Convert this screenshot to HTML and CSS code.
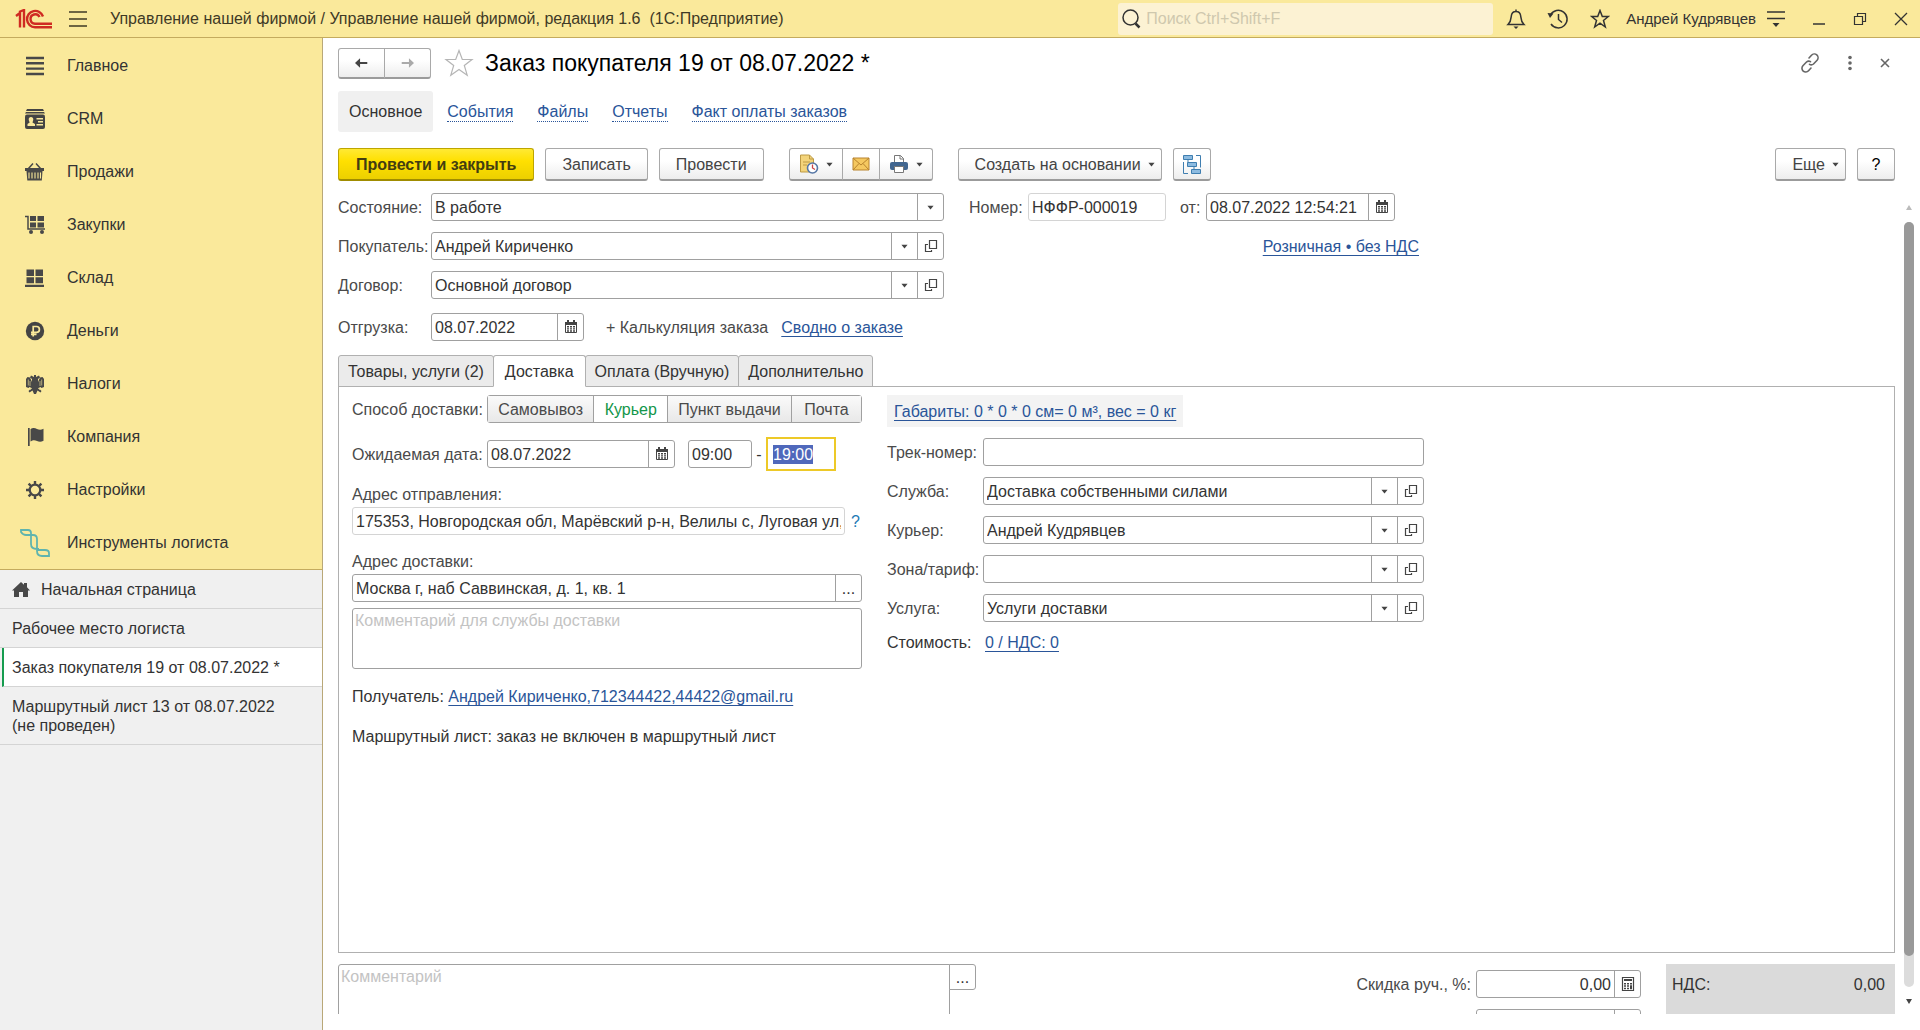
FILE: index.html
```html
<!DOCTYPE html>
<html lang="ru">
<head>
    <meta charset="UTF-8">
    <meta name="viewport" content="width=device-width, initial-scale=1.0">
    <title>Управление нашей фирмой</title>
    <link rel="stylesheet" href="styles.css">
</head>
<body>
    <svg class="sprite" aria-hidden="true">
        <symbol id="i-arrow" viewBox="0 0 8 5"><path d="M0.500 0.500h7L4 4.800z" fill="#444"/></symbol>
        <symbol id="i-open" viewBox="0 0 14 14"><path d="M5.500 1.500h7v8h-7zM4 5.500H1.500v7h6V11" fill="none" stroke="#444" stroke-width="1.200"/></symbol>
        <symbol id="i-calendar" viewBox="0 0 14 14"><path d="M1.500 3.500h11v9h-11z" fill="#fff" stroke="#444"/><path d="M1 2h12v3H1zM3 0h2v2H3zM9 0h2v2H9z" fill="#444"/><path d="M3 6h2v1.500H3zM6 6h2v1.500H6zM9 6h2v1.500H9zM3 8.200h2v1.400H3zM6 8.200h2v1.400H6zM9 8.200h2v1.400H9zM3 10.300h2v1.400H3zM6 10.300h2v1.400H6zM9 10.300h2v1.400H9z" fill="#444"/></symbol>
        <symbol id="i-calc" viewBox="0 0 14 16"><path d="M1.500 1.500h11v13h-11z" fill="#fff" stroke="#444" stroke-width="1.200"/><path d="M3 3h8v2H3zM3 7h2v1.500H3zM6 7h2v1.500H6zM9 7h2v1.500H9zM3 9.300h2v1.500H3zM6 9.300h2v1.500H6zM9 9.300h2v4H9zM3 11.800h2v1.500H3zM6 11.800h2v1.500H6z" fill="#444"/></symbol>
    </svg>

    <header class="titlebar">
        <svg class="logo" width="38" height="20" viewBox="0 0 38 20" fill="none" stroke="#cf2b22" stroke-width="2.400"><path d="M1 7l4-3v14.500M4 3l5-2v17.500"/><path d="M28 7.500A8.200 8.200 0 1 0 20 18.300H37"/><path d="M24.500 8A4.700 4.700 0 1 0 20 14.700H37"/></svg>
        <button class="icon-btn burger" aria-label="Меню"><svg width="20" height="18" viewBox="0 0 20 18" stroke="#3f3a26" stroke-width="1.500"><path d="M1 2h18M1 9h18M1 16h18"/></svg></button>
        <span class="app-title">Управление нашей фирмой / Управление нашей фирмой, редакция 1.6 &nbsp;(1С:Предприятие)</span>
        <label class="search">
            <svg width="20" height="20" viewBox="0 0 20 20" fill="none" stroke="#333"><circle cx="9.500" cy="8.500" r="7.500" stroke-width="1.500"/><path d="M14.500 14.500l4 4" stroke-width="2.500"/></svg>
            <input type="text" placeholder="Поиск Ctrl+Shift+F" aria-label="Поиск">
        </label>
        <div class="title-tools">
            <button class="icon-btn" aria-label="Уведомления"><svg width="20" height="22" viewBox="0 0 20 22" fill="none" stroke="#333" stroke-width="1.500"><path d="M2 16.500c3-3 3-5 3.300-8.500C5.600 5 7.500 3.500 10 3.500S14.400 5 14.700 8c.3 3.500.3 5.500 3.300 8.500zM10 1.500v2"/><path d="M7.500 18.500h5L10 21z" fill="#333" stroke="none"/></svg></button>
            <button class="icon-btn" aria-label="История"><svg width="22" height="22" viewBox="0 0 22 22" fill="none" stroke="#333" stroke-width="1.500"><path d="M3.500 7A8.800 8.800 0 1 1 4 16M11.500 6v5.500l3.500 3"/><path d="M0.500 5l6 .5L3 10z" fill="#333" stroke="none"/></svg></button>
            <button class="icon-btn" aria-label="Избранное"><svg width="20" height="20" viewBox="0 0 20 20" fill="none" stroke="#333" stroke-width="1.500"><path d="M10 1.500l2.300 6h6l-4.800 4 1.800 6.500L10 14.200 4.700 18l1.800-6.500-4.800-4h6z"/></svg></button>
        </div>
        <span class="user">Андрей Кудрявцев</span>
        <div class="window-tools">
            <button class="icon-btn" aria-label="Настройка"><svg width="18" height="20" viewBox="0 0 18 20" stroke="#333" stroke-width="1.500"><path d="M0 3h18M0 9.500h18"/><path d="M5.500 14h7L9 18z" fill="#333" stroke="none"/></svg></button>
            <button class="icon-btn" aria-label="Свернуть"><svg width="14" height="14" viewBox="0 0 14 14" stroke="#333" stroke-width="1.500"><path d="M1 12h12"/></svg></button>
            <button class="icon-btn" aria-label="Развернуть"><svg width="14" height="14" viewBox="0 0 14 14" fill="none" stroke="#333" stroke-width="1.200"><path d="M1.500 4.500h8v8h-8zM4.500 4.500v-3h8v8h-3"/></svg></button>
            <button class="icon-btn" aria-label="Закрыть"><svg width="14" height="14" viewBox="0 0 14 14" stroke="#333" stroke-width="1.300"><path d="M1 1l12 12M13 1L1 13"/></svg></button>
        </div>
    </header>

    <div class="workspace">
        <aside class="sidebar">
            <nav class="sections">
                <a href="#"><svg viewBox="0 0 20 20" fill="none" stroke="#484848" stroke-width="2.400"><path d="M1 2h18M1 7.300h18M1 12.600h18M1 18h18"/></svg>Главное</a>
                <a href="#"><svg viewBox="0 0 20 20" fill="#444"><path d="M2 0h16l1 2H1zM1 3h18l1 1.500H0z"/><rect y="5.500" width="20" height="14.500" rx="2"/><path d="M6 8c1.500 0 2.300 1 2.300 2.300S7.500 13 7.500 13.500L10 15v2H2.500v-2l2.200-1.500C4.500 13 3.700 11.500 3.700 10.300S4.500 8 6 8zM11.500 9H18v1.500h-6.500zM13 12h5v1.500h-5zM11.500 15H18v1.500h-6.500z" fill="#fae99b"/></svg>CRM</a>
                <a href="#"><svg viewBox="0 0 20 20" fill="#484848"><path d="M0 6h19v3H0zM1.500 9h16l-.7 9.500H2.300z"/><path d="M3.500 6.500L8 1.500M15.500 6.500L11 1.500" stroke="#484848" stroke-width="1.500"/><path d="M4 10.500v6M7 10.500v6M10 10.500v6M13 10.500v6M15.500 10.500v6" stroke="#fae99b" stroke-width="1.100"/></svg>Продажи</a>
                <a href="#"><svg viewBox="0 0 20 20" fill="#484848"><path d="M5 1h6v5H5zM12.500 1H19v5h-6.500zM5 7.500h6v5H5zM12.500 7.500H19v5h-6.500z"/><path d="M0 1.500h3v12.500h17" fill="none" stroke="#484848" stroke-width="1.500"/><circle cx="6" cy="17" r="2"/><circle cx="17" cy="17" r="2"/></svg>Закупки</a>
                <a href="#"><svg viewBox="0 0 20 20" fill="#484848"><path d="M1.500 1.500H9v6.500H1.500zM10.500 1.500H18v6.500h-7.500zM1.500 9.300H9v6H1.500zM10.500 9.300H18v6h-7.500zM0 16.700h19V19H0z"/></svg>Склад</a>
                <a href="#"><svg viewBox="0 0 20 20"><circle cx="10" cy="10" r="9.200" fill="#444"/><path d="M8.200 15.500V5.500h3.300a2.900 2.900 0 0 1 0 5.800H6M6 13.300h5.500" fill="none" stroke="#fae99b" stroke-width="1.700"/></svg>Деньги</a>
                <a href="#"><svg viewBox="0 0 20 20" fill="#484848"><path d="M9 1h2v2l3-1.500 1 2-2 1.500V8l2-4.500L17.500 3 19 5v8l-2.500 1-1-1-2 1 3 3-1 1.500-3-2L11 20H9l-1.500-3.500-3 2-1-1.500 3-3-2-1-1 1L1 13V5l1.500-2L5 3.500 7 8V5L5 3.500l1-2L9 3z"/><path d="M3.300 5.500v6M5 7v5M16.700 5.500v6M15 7v5M7 14l-2 2M13 14l2 2" stroke="#fae99b" stroke-width=".6"/></svg>Налоги</a>
                <a href="#"><svg viewBox="0 0 20 20" fill="#484848"><path d="M3 1h1.700v18H3zM5.500 2.200c3-2 4.500-1 6.500-.2s4 1 6.500-.2v12c-2.500 1.200-4.500 1-6.500.2s-3.500-1.500-6.500.5z"/></svg>Компания</a>
                <a href="#"><svg viewBox="0 0 20 20" fill="none" stroke="#484848"><circle cx="10" cy="10" r="5.300" stroke-width="2.300"/><path d="M10 1v4M10 15v4M1 10h4M15 10h4M3.600 3.600l2.800 2.800M13.600 13.600l2.800 2.800M3.600 16.400l2.800-2.800M13.600 6.400l2.800-2.800" stroke-width="2.400"/></svg>Настройки</a>
                <a href="#"><svg class="wide" viewBox="0 0 32 30" fill="none" stroke="#5fb4ae" stroke-width="1.800"><path d="M2 2h7q3 0 3 3v2h-5q-3 0-5-3zM12 7h2q4 0 4 4v8M12 7v9q0 5 6 5h2M18 19v4q0 5 5 5h7v-3q0-3-4-3h-8"/></svg>Инструменты логиста</a>
            </nav>
            <nav class="opened">
                <a href="#" class="home"><svg width="18" height="16" viewBox="0 0 18 16" fill="#484848"><path d="M9 0l3 2.700V1h3v4.300L18 8.500h-2V15h-5v-5H7v5H2V8.500H0z"/></svg>Начальная страница</a>
                <a href="#">Рабочее место логиста</a>
                <a href="#" class="current">Заказ покупателя 19 от 08.07.2022 *</a>
                <a href="#">Маршрутный лист 13 от 08.07.2022<br>(не проведен)</a>
            </nav>
        </aside>

        <main class="document">
            <div class="doc-head">
                <div class="btn-group">
                    <button class="btn history-btn" aria-label="Назад"><svg width="18" height="14" viewBox="0 0 18 14"><path d="M0 7l7-6.500V5.500h10v3H7v5z" fill="#444"/></svg></button>
                    <button class="btn history-btn" aria-label="Вперед"><svg width="18" height="14" viewBox="0 0 18 14"><path d="M18 7l-7-6.500V5.500H1v3h10v5z" fill="#aaa"/></svg></button>
                </div>
                <button class="icon-btn" aria-label="В избранное"><svg width="30" height="28" viewBox="0 0 30 28" fill="none" stroke="#b5b5b5" stroke-width="1.200"><path d="M15 1.500l3.300 9H28l-7.700 6 2.900 9.700L15 20.500l-8.200 5.700 2.900-9.700L2 10.500h9.700z"/></svg></button>
                <h1>Заказ покупателя 19 от 08.07.2022 *</h1>
                <div class="doc-tools">
                    <button class="icon-btn" aria-label="Ссылка"><svg width="20" height="20" viewBox="0 0 20 20" fill="none" stroke="#666" stroke-width="1.600" stroke-linecap="round"><path d="M9 5l2.500-2.800a3.700 3.700 0 0 1 5.600 5L13.500 11q-2 1.700-4 .3M11 15l-2.500 2.800a3.700 3.700 0 0 1-5.600-5L6.500 9q2-1.700 4-.3"/></svg></button>
                    <button class="icon-btn" aria-label="Еще"><svg width="6" height="16" viewBox="0 0 6 16" fill="#666"><circle cx="3" cy="2.500" r="1.800"/><circle cx="3" cy="8" r="1.800"/><circle cx="3" cy="13.500" r="1.800"/></svg></button>
                    <button class="icon-btn" aria-label="Закрыть"><svg width="10" height="10" viewBox="0 0 10 10" stroke="#666" stroke-width="1.600"><path d="M1 1l8 8M9 1L1 9"/></svg></button>
                </div>
            </div>

            <nav class="doc-nav">
                <a href="#" class="active">Основное</a>
                <a href="#">События</a>
                <a href="#">Файлы</a>
                <a href="#">Отчеты</a>
                <a href="#">Факт оплаты заказов</a>
            </nav>

            <div class="toolbar">
                <button class="btn primary">Провести и закрыть</button>
                <button class="btn">Записать</button>
                <button class="btn">Провести</button>
                <div class="btn-group files">
                    <button class="btn with-arrow" aria-label="Документы"><svg width="20" height="20" viewBox="0 0 20 20"><path d="M1.500 1h9l4 4v13h-13z" fill="#f3d47b" stroke="#bd9a45"/><path d="M10.500 1v4h4M4 8h7M4 11h4" fill="none" stroke="#bd9a45"/><circle cx="13.500" cy="14" r="5" fill="#fff" stroke="#5576a5" stroke-width="1.600"/><path d="M13.500 10.500V14l2.500 1.500" fill="none" stroke="#c44" stroke-width="1.300"/></svg><svg class="arrow"><use href="#i-arrow"/></svg></button>
                    <button class="btn" aria-label="Отправить"><svg width="18" height="14" viewBox="0 0 18 14"><path d="M1 1h16v12H1z" fill="#f5c860" stroke="#b8832e"/><path d="M1 1l8 7 8-7M1 13l6-6.500M17 13l-6-6.500" fill="none" stroke="#b8832e"/></svg></button>
                    <button class="btn with-arrow" aria-label="Печать"><svg width="20" height="20" viewBox="0 0 20 20"><path d="M5.500 8V1.500h6l3 3V8" fill="#fff" stroke="#777"/><path d="M11 1.500v3.500h3.500" fill="none" stroke="#777"/><rect x="1" y="8" width="18" height="8" rx="2" fill="#416690"/><path d="M5.500 12.500h9v6h-9z" fill="#fff" stroke="#777"/></svg><svg class="arrow"><use href="#i-arrow"/></svg></button>
                </div>
                <button class="btn with-arrow create">Создать на основании<svg class="arrow"><use href="#i-arrow"/></svg></button>
                <button class="btn square" aria-label="Связанные документы"><svg width="20" height="20" viewBox="0 0 20 20" fill="#8dbbe0" stroke="#3f7eb0"><path d="M1.500 1.500h9v4h-9zM5.500 8.500h9v4h-9zM9.500 15.500h9v4h-9z"/><path d="M14 1.500h4.500v12M1.500 8v11.500H6M6 5.500v3M12 12.500v3" fill="none"/></svg></button>
                <button class="btn with-arrow more">Еще<svg class="arrow"><use href="#i-arrow"/></svg></button>
                <button class="btn square help">?</button>
            </div>

            <div class="form-area">
                <form class="order" onsubmit="return false">
                    <div class="head-fields">
                        <div class="head-left">
                            <div class="row">
                                <label for="state">Состояние:</label>
                                <div class="field"><select id="state"><option>В работе</option></select><span class="cell"><svg class="arrow"><use href="#i-arrow"/></svg></span></div>
                            </div>
                            <div class="row">
                                <label for="customer">Покупатель:</label>
                                <div class="field"><select id="customer"><option>Андрей Кириченко</option></select><span class="cell"><svg class="arrow"><use href="#i-arrow"/></svg></span><button class="cell" aria-label="Открыть"><svg class="ico"><use href="#i-open"/></svg></button></div>
                            </div>
                            <div class="row">
                                <label for="contract">Договор:</label>
                                <div class="field"><select id="contract"><option>Основной договор</option></select><span class="cell"><svg class="arrow"><use href="#i-arrow"/></svg></span><button class="cell" aria-label="Открыть"><svg class="ico"><use href="#i-open"/></svg></button></div>
                            </div>
                            <div class="row ship-row">
                                <label for="ship">Отгрузка:</label>
                                <div class="field date"><input type="text" id="ship" value="08.07.2022"><button class="cell" aria-label="Календарь"><svg class="ico"><use href="#i-calendar"/></svg></button></div>
                                <span class="calc-note">+ Калькуляция заказа</span>
                                <a href="#" class="link">Сводно о заказе</a>
                            </div>
                        </div>
                        <div class="head-right">
                            <div class="row">
                                <label for="number">Номер:</label>
                                <div class="field number readonly"><input type="text" id="number" value="НФФР-000019" readonly></div>
                                <label for="moment" class="from">от:</label>
                                <div class="field moment"><input type="text" id="moment" value="08.07.2022 12:54:21"><button class="cell" aria-label="Календарь"><svg class="ico"><use href="#i-calendar"/></svg></button></div>
                            </div>
                            <div class="row price-kind"><a href="#" class="link">Розничная • без НДС</a></div>
                        </div>
                    </div>

                    <div class="tabs" role="tablist">
                        <button role="tab">Товары, услуги (2)</button>
                        <button role="tab" class="selected" aria-selected="true">Доставка</button>
                        <button role="tab">Оплата (Вручную)</button>
                        <button role="tab">Дополнительно</button>
                    </div>

                    <div class="panel">
                        <div class="delivery">
                            <div class="row">
                                <span class="caption">Способ доставки:</span>
                                <div class="segments">
                                    <label><input type="radio" name="way">Самовывоз</label>
                                    <label><input type="radio" name="way" checked>Курьер</label>
                                    <label><input type="radio" name="way">Пункт выдачи</label>
                                    <label><input type="radio" name="way">Почта</label>
                                </div>
                            </div>
                            <div class="row when">
                                <label class="caption" for="expected">Ожидаемая дата:</label>
                                <div class="field expected"><input type="text" id="expected" value="08.07.2022"><button class="cell" aria-label="Календарь"><svg class="ico"><use href="#i-calendar"/></svg></button></div>
                                <div class="field time"><input type="text" value="09:00" aria-label="Время с"></div>
                                <span class="dash">-</span>
                                <div class="field time focused"><input type="text" id="timeTo" value="19:00" aria-label="Время по"></div>
                            </div>
                            <label class="above" for="addrFrom">Адрес отправления:</label>
                            <div class="row from-row">
                                <div class="field readonly"><input type="text" id="addrFrom" value="175353, Новгородская обл, Марёвский р-н, Велилы с, Луговая ул, дом 1" readonly></div>
                                <button class="hint" aria-label="Подсказка">?</button>
                            </div>
                            <label class="above" for="addrTo">Адрес доставки:</label>
                            <div class="field"><input type="text" id="addrTo" value="Москва г, наб Саввинская, д. 1, кв. 1"><button class="cell">...</button></div>
                            <textarea class="courier-note" placeholder="Комментарий для службы доставки" aria-label="Комментарий для службы доставки"></textarea>
                            <p class="receiver">Получатель: <a href="#" class="link">Андрей Кириченко,712344422,44422@gmail.ru</a></p>
                            <p class="route">Маршрутный лист: заказ не включен в маршрутный лист</p>
                        </div>
                        <div class="service">
                            <div class="size"><a href="#" class="link">Габариты: 0 * 0 * 0 см= 0 м³, вес = 0 кг</a></div>
                            <div class="row">
                                <label for="track">Трек-номер:</label>
                                <div class="field"><input type="text" id="track"></div>
                            </div>
                            <div class="row">
                                <label for="carrier">Служба:</label>
                                <div class="field"><select id="carrier"><option>Доставка собственными силами</option></select><span class="cell"><svg class="arrow"><use href="#i-arrow"/></svg></span><button class="cell" aria-label="Открыть"><svg class="ico"><use href="#i-open"/></svg></button></div>
                            </div>
                            <div class="row">
                                <label for="courier">Курьер:</label>
                                <div class="field"><select id="courier"><option>Андрей Кудрявцев</option></select><span class="cell"><svg class="arrow"><use href="#i-arrow"/></svg></span><button class="cell" aria-label="Открыть"><svg class="ico"><use href="#i-open"/></svg></button></div>
                            </div>
                            <div class="row">
                                <label for="zone">Зона/тариф:</label>
                                <div class="field"><select id="zone"><option></option></select><span class="cell"><svg class="arrow"><use href="#i-arrow"/></svg></span><button class="cell" aria-label="Открыть"><svg class="ico"><use href="#i-open"/></svg></button></div>
                            </div>
                            <div class="row">
                                <label for="kind">Услуга:</label>
                                <div class="field"><select id="kind"><option>Услуги доставки</option></select><span class="cell"><svg class="arrow"><use href="#i-arrow"/></svg></span><button class="cell" aria-label="Открыть"><svg class="ico"><use href="#i-open"/></svg></button></div>
                            </div>
                            <p class="cost">Стоимость: <a href="#" class="link">0 / НДС: 0</a></p>
                        </div>
                    </div>

                    <div class="totals">
                        <div class="comment">
                            <textarea placeholder="Комментарий" aria-label="Комментарий"></textarea>
                            <button class="comment-more">...</button>
                        </div>
                        <div class="discount">
                            <div class="row">
                                <label for="discount">Скидка руч., %:</label>
                                <div class="field"><input type="text" id="discount" value="0,00"><button class="cell" aria-label="Калькулятор"><svg class="ico tall"><use href="#i-calc"/></svg></button></div>
                            </div>
                            <div class="row">
                                <div class="field"><input type="text" aria-label="Скидка, сумма"><button class="cell" aria-label="Калькулятор"></button></div>
                            </div>
                        </div>
                        <div class="vat"><span>НДС:</span><span>0,00</span></div>
                    </div>
                </form>
                <div class="scrollbar">
                    <svg width="6" height="5" viewBox="0 0 6 5"><path d="M3 0l3 5H0z" fill="#bbb"/></svg>
                    <div class="track"><div class="thumb"></div></div>
                    <svg width="6" height="5" viewBox="0 0 6 5"><path d="M3 5l3-5H0z" fill="#444"/></svg>
                </div>
            </div>
        </main>
    </div>

    <script>
        const timeTo = document.getElementById('timeTo');
        timeTo.focus();
        timeTo.select();
    </script>
</body>
</html>
```
FILE: styles.css
```css
* {
    box-sizing: border-box;
}

body {
    display: flex;
    flex-direction: column;
    height: 100vh;
    margin: 0;
    overflow: hidden;
    font-family: "Liberation Sans", Arial, sans-serif;
    font-size: 16px;
    line-height: 19px;
    color: #333;
    background-color: #fff;
}

button, input, select, textarea {
    font: inherit;
    color: inherit;
}

button {
    display: flex;
    align-items: center;
    justify-content: center;
    padding: 0;
}

p, h1 {
    margin: 0;
}

.sprite {
    display: none;
}

.icon-btn {
    border: 0;
    background: none;
}

.arrow {
    width: 7px;
    height: 5px;
}

.ico {
    width: 14px;
    height: 14px;
}

.tall {
    height: 16px;
}

.link {
    color: #2a5599;
    text-underline-offset: 3px;
    text-decoration-skip-ink: none;
}

/* title bar */
.titlebar {
    display: flex;
    align-items: center;
    flex: none;
    height: 38px;
    padding: 0 12px 0 15px;
    background-color: #fae99b;
    border-bottom: 1px solid #c4ab5e;
}

.burger {
    margin: 0 22px 0 15px;
}

.app-title {
    flex: 1;
    white-space: nowrap;
    color: #3f3a26;
}

.search {
    display: flex;
    align-items: center;
    gap: 3px;
    width: 375px;
    height: 32px;
    padding-left: 3px;
    background-color: #fcf2d3;
    border-radius: 3px;
}

.search input {
    flex: 1;
    border: 0;
    background: none;
    outline: none;
}

.search input::placeholder {
    color: #cfc8ae;
}

.title-tools {
    display: flex;
    align-items: center;
    gap: 21px;
    margin: 0 16px 0 13px;
}

.user {
    font-size: 15px;
}

.window-tools {
    display: flex;
    align-items: center;
    gap: 27px;
    margin-left: 11px;
}

.workspace {
    display: flex;
    flex: 1;
    min-height: 0;
}

/* sidebar */
.sidebar {
    flex: none;
    width: 323px;
    background-color: #f0f0f0;
    border-right: 1px solid #b9a878;
}

.sidebar a {
    display: flex;
    align-items: center;
    color: #333;
    text-decoration: none;
}

.sections {
    padding-top: 1px;
    background-color: #fae99b;
    border-bottom: 1px solid #c4ab5e;
}

.sections a {
    height: 53px;
    padding-left: 25px;
    gap: 22px;
}

.sections svg {
    width: 20px;
    height: 20px;
}

.sections .wide {
    width: 32px;
    height: 30px;
    margin: 0 -6px;
}

.opened a {
    min-height: 39px;
    padding: 10px 12px 9px;
    border-bottom: 1px solid #d4d4d4;
}

.opened .home {
    gap: 11px;
}

.opened .current {
    padding-left: 8px;
    border-left: 2px solid #169c4f;
    background-color: #fff;
    margin-left: 2px;
}

/* document */
.document {
    display: flex;
    flex-direction: column;
    flex: 1;
    min-width: 0;
    padding: 10px 6px 16px 15px;
}

.doc-head {
    display: flex;
    align-items: center;
    height: 30px;
    padding-right: 24px;
}

.doc-head > .icon-btn {
    margin: 0 11px 0 13px;
}

.doc-head h1 {
    font-size: 23px;
    font-weight: normal;
    color: #000;
}

.doc-tools {
    display: flex;
    align-items: center;
    gap: 27px;
    margin-left: auto;
}

.doc-nav {
    display: flex;
    gap: 24px;
    margin-top: 13px;
    height: 41px;
    align-items: center;
}

.doc-nav a {
    color: #2a5599;
    text-decoration: none;
    border-bottom: 1px dotted #2a5599;
}

.doc-nav .active {
    align-self: stretch;
    padding: 11px 11px;
    margin-right: -10px;
    color: #333;
    background-color: #f0f0f0;
    border: 0;
    border-radius: 3px;
}

.btn {
    height: 33px;
    padding: 0 16px;
    color: #444;
    background: linear-gradient(#fff 40%, #ededed);
    border: 1px solid #a9a9a9;
    border-bottom: 2px solid #9b9b9b;
    border-radius: 3px;
}

.btn-group {
    display: flex;
}

.btn-group .btn {
    border-radius: 0;
    margin-left: -1px;
}

.btn-group .btn:first-child {
    border-radius: 3px 0 0 3px;
    margin-left: 0;
}

.btn-group .btn:last-child {
    border-radius: 0 3px 3px 0;
}

.history-btn {
    width: 47px;
    height: 31px;
}

.toolbar {
    display: flex;
    gap: 11px;
    margin-top: 16px;
    padding-right: 19px;
}

.toolbar .primary {
    padding: 0 17px;
    font-weight: bold;
    color: #433d10;
    background: linear-gradient(#ffe934, #ffe000 40%, #ecd000);
    border-color: #bda500;
    border-bottom-color: #a08c00;
}

.with-arrow {
    gap: 7px;
    padding-right: 6px;
}

.files {
    margin: 0 14px;
}

.files .btn {
    padding: 0 9px;
}

.more {
    margin-left: auto;
}

.square {
    width: 38px;
    padding: 0;
}

.help {
    color: #000;
}

.form-area {
    display: flex;
    flex: 1;
    gap: 9px;
    min-height: 0;
    margin-top: 12px;
}

.order {
    display: flex;
    flex-direction: column;
    flex: 1;
    min-width: 0;
}

.row {
    display: flex;
    align-items: center;
    min-height: 28px;
}

.row label,
.row .caption {
    flex: none;
    color: #4a4a4a;
}

.field {
    display: flex;
    flex: 1;
    min-width: 0;
    height: 28px;
    background-color: #fff;
    border: 1px solid #a0a0a0;
    border-radius: 3px;
}

.field input,
.field select {
    flex: 1;
    min-width: 0;
    width: 0;
    padding: 0 3px;
    border: 0;
    background: none;
    outline: none;
    appearance: none;
}

.field.readonly {
    border-color: #d4d4d4;
}

.cell {
    display: flex;
    align-items: center;
    justify-content: center;
    flex: none;
    width: 26px;
    border: 0;
    border-left: 1px solid #a0a0a0;
    background: none;
}

.head-fields {
    display: flex;
    gap: 25px;
}

.head-left {
    display: flex;
    flex-direction: column;
    gap: 11px;
    width: 606px;
}

.head-left label {
    width: 93px;
}

.ship-row {
    margin-top: 3px;
}

.field.date {
    flex: none;
    width: 153px;
}

.calc-note {
    margin: 0 13px 0 22px;
    color: #4a4a4a;
}

.head-right {
    display: flex;
    flex-direction: column;
    gap: 11px;
    width: 450px;
}

.head-right label {
    width: 59px;
}

.head-right .from {
    width: 26px;
    margin-left: 14px;
}

.field.number {
    flex: none;
    width: 138px;
}

.field.moment {
    flex: none;
    width: 189px;
}

.price-kind {
    justify-content: flex-end;
}

/* tabs */
.tabs {
    display: flex;
    margin-top: 14px;
}

.tabs button {
    height: 32px;
    padding: 0 9px;
    margin: 0 -1px -1px 0;
    background-color: #ebebeb;
    border: 1px solid #b0b0b0;
    border-radius: 3px 3px 0 0;
}

.tabs .selected {
    position: relative;
    padding: 0 11px;
    background-color: #fff;
    border-bottom-color: #fff;
}

.panel {
    display: flex;
    gap: 25px;
    flex: 1;
    min-height: 0;
    padding: 8px 13px;
    border: 1px solid #b0b0b0;
}

.delivery {
    width: 510px;
}

.delivery .caption {
    width: 135px;
}

.segments {
    display: flex;
    flex: 1;
    height: 28px;
    border: 1px solid #a0a0a0;
    border-radius: 3px;
}

.segments label {
    display: flex;
    align-items: center;
    justify-content: center;
    flex: 1 1 auto;
    min-width: 70px;
    border-left: 1px solid #a0a0a0;
    background: linear-gradient(#fafafa, #e8e8e8);
}

.segments label:first-child {
    border-left: 0;
}

.segments label:has(:checked) {
    color: #12964a;
    background: #fff;
}

.segments input {
    position: absolute;
    opacity: 0;
}

.when {
    margin-top: 14px;
    height: 34px;
}

.field.expected {
    flex: none;
    width: 188px;
    margin-right: 13px;
}

.field.time {
    flex: none;
    width: 64px;
}

.dash {
    width: 14px;
    text-align: center;
}

.field.time.focused {
    width: 70px;
    height: 34px;
    padding-left: 2px;
    border: 2px solid #edc928;
    border-radius: 0;
}

::selection {
    color: #fff;
    background-color: #4f68bb;
}

.above {
    display: block;
    margin: 14px 0 3px;
    color: #4a4a4a;
}

.from-row {
    margin-bottom: 17px;
}

.hint {
    width: 13px;
    margin-left: 4px;
    border: 0;
    background: none;
    color: #1d7ab5;
}

textarea {
    display: block;
    resize: none;
    padding: 2px;
    border: 1px solid #a0a0a0;
    border-radius: 3px;
    outline: none;
}

textarea::placeholder {
    color: #c3c3c3;
}

.courier-note {
    width: 100%;
    height: 61px;
    margin-top: 6px;
}

.receiver {
    margin-top: 18px;
}

.route {
    margin-top: 21px;
}

.service {
    display: flex;
    flex-direction: column;
    gap: 11px;
    width: 537px;
}

.service label {
    width: 96px;
}

.size {
    align-self: flex-start;
    padding: 7px 7px 6px;
    background-color: #f3f3f3;
}

.cost .link {
    margin-left: 9px;
}

.totals {
    display: flex;
    flex: none;
    height: 50px;
    margin-top: 11px;
    overflow: hidden;
}

.comment {
    display: flex;
    align-items: flex-start;
}

.comment textarea {
    width: 612px;
    height: 70px;
    border-top-right-radius: 0;
}

.comment-more {
    width: 27px;
    height: 26px;
    margin-left: -1px;
    border: 1px solid #a0a0a0;
    border-radius: 0 3px 3px 0;
    background-color: #fff;
}

.discount {
    display: flex;
    flex-direction: column;
    gap: 11px;
    margin: 6px 25px 0 auto;
    align-items: flex-end;
}

.discount label {
    margin-right: 5px;
}

.discount .field {
    flex: none;
    width: 165px;
}

.discount input {
    text-align: right;
}

.vat {
    display: flex;
    justify-content: space-between;
    width: 229px;
    padding: 11px 10px 0 6px;
    background-color: #dadada;
}

.scrollbar {
    display: flex;
    flex-direction: column;
    align-items: center;
    gap: 12px;
    width: 10px;
    padding: 12px 0 10px;
}

.track {
    flex: 1;
    width: 10px;
    background-color: #dcdcdc;
    border-radius: 5px;
}

.thumb {
    height: 96%;
    background-color: #999;
    border-radius: 5px;
}
```
